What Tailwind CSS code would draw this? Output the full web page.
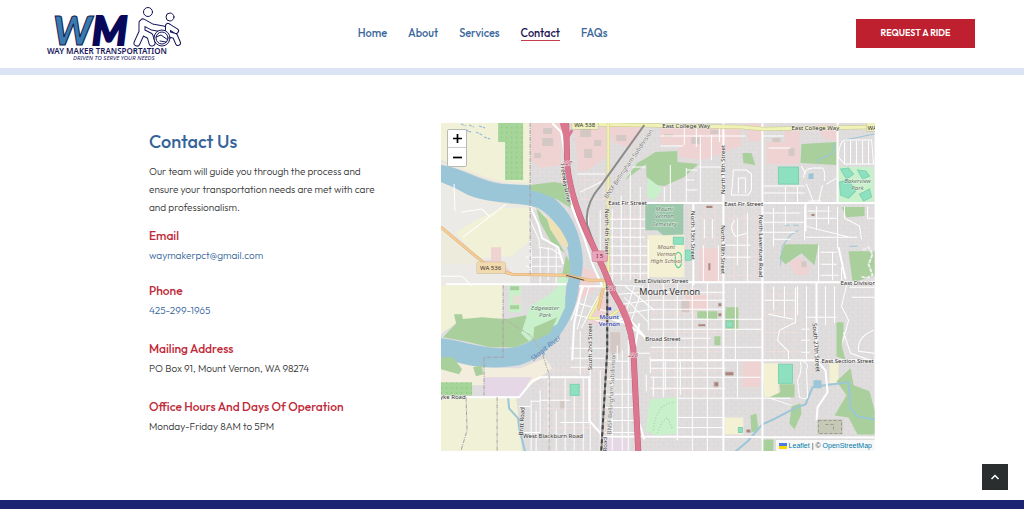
<!DOCTYPE html>
<html lang="en">
<head>
<meta charset="utf-8">
<meta name="viewport" content="width=device-width, initial-scale=1">
<title>Contact | Way Maker Transportation</title>
<script src="https://cdn.jsdelivr.net/npm/@tailwindcss/browser@4"></script>
</head>
<body class="flex min-h-screen flex-col bg-white font-[Outfit,Lato,sans-serif] text-[10px] text-[#333]">
<header class="border-b-[7px] border-[#dbe4f5]">
  <div class="grid h-[68px] grid-cols-[minmax(0,312fr)_auto_minmax(0,368fr)] items-center pr-[49px] pb-[2px] pl-[46px]">
    <a href="#" aria-label="Way Maker Transportation home" class="w-[138px]">
      <svg viewBox="46 3 138 60" class="block h-[60px] w-[138px]">
        <g font-family="Lato, sans-serif" font-size="40" font-weight="900" font-style="italic" stroke="#12184f">
          <text x="53" y="45" fill="#397baf">W</text>
          <text x="92" y="45" fill="#08085b" stroke="#08085b" stroke-width="2">M</text>
        </g>
        <g fill="none" stroke-linejoin="round" stroke-linecap="round">
          <path d="M142 23V32L137 43M142 32L150 36L152 43M143 22L152 27L163 29" stroke="#17165b" stroke-width="7"/>
          <path d="M142 23V32L137 43M142 32L150 36L152 43M143 22L152 27L163 29" stroke="#fff" stroke-width="5"/>
          <path d="M168 26V34L175 36L178 43M168 26L176 31" stroke="#17165b" stroke-width="6"/>
          <path d="M168 26V34L175 36L178 43M168 26L176 31" stroke="#fff" stroke-width="4"/>
          <g stroke="#17165b" stroke-width="1">
            <circle cx="148" cy="12" r="4.500" fill="#fff"/>
            <circle cx="170" cy="17" r="4" fill="#fff"/>
            <circle cx="162" cy="38" r="8" fill="#fff"/><circle cx="162" cy="38" r="6"/>
            <path d="M156 37L161 35L168 40M160 41L166 42"/>
          </g>
        </g>
        <text x="47" y="54" font-family="Noto Sans, sans-serif" font-size="8" font-weight="600" fill="#17165b">WAY MAKER TRANSPORTATION</text>
        <text x="73" y="60" font-family="Noto Sans, sans-serif" font-size="6" font-style="italic" fill="#17165b">DRIVEN TO SERVE YOUR NEEDS</text>
      </svg>
    </a>
    <nav aria-label="Main" class="flex gap-[21px] text-[11px] leading-[14px] font-medium text-[#3a689c]">
      <a href="#">Home</a><a href="#">About</a><a href="#">Services</a>
      <a href="#" aria-current="page" class="border-b border-[#c63c48] text-[#1c1650]">Contact</a><a href="#">FAQs</a>
    </nav>
    <button class="h-[29px] w-[119px] justify-self-end bg-[#bf202f] text-[9px] font-semibold text-white">REQUEST A RIDE</button>
  </div>
</header>

<main class="mx-auto grid w-full max-w-[726px] flex-1 grid-cols-[minmax(0,292fr)_minmax(0,433fr)] items-start pt-12 pb-12">
  <section class="max-w-[236px] pt-[7px] leading-5 font-light">
    <h1 class="text-[18px] leading-6 font-medium text-[#34639a]">Contact Us</h1>
    <p class="mt-[9px] leading-[18px]">Our team will guide you through the process and ensure your transportation needs are met with care and professionalism.</p>
    <h2 class="mt-[9px] text-[12px] font-medium text-[#bf2a38]">Email</h2>
    <p><a href="mailto:waymakerpct@gmail.com" class="text-[#34639a]">waymakerpct@gmail.com</a></p>
    <h2 class="mt-[15px] text-[12px] font-medium text-[#bf2a38]">Phone</h2>
    <p><a href="tel:4252991965" class="text-[#34639a]">425-299-1965</a></p>
    <h2 class="mt-[18px] text-[12px] font-medium text-[#bf2a38]">Mailing Address</h2>
    <p>PO Box 91, Mount Vernon, WA 98274</p>
    <h2 class="mt-[18px] text-[12px] font-medium text-[#bf2a38]">Office Hours And Days Of Operation</h2>
    <p>Monday-Friday 8AM to 5PM</p>
  </section>

  <section aria-label="Map" class="relative overflow-hidden">
    <svg viewBox="441 123 433 328" class="block w-full" role="img" aria-label="Street map of Mount Vernon">
      <defs>
        <pattern id="houses" width="9" height="8" patternUnits="userSpaceOnUse">
          <path d="M1 1h2v1h-2zM5 2h2v1h-2zM2 5h1v2h-1zM6 5h2v1h-2z" fill="#d5c9c5"/>
        </pattern>
        <pattern id="orchard" width="5" height="5" patternUnits="userSpaceOnUse">
          <path d="M1 2h1v1h-1z" fill="#6fb15e"/>
        </pattern>
        <pattern id="alleys" width="10" height="19" patternUnits="userSpaceOnUse">
          <path d="M4 0v19M0 9h10" stroke="#f1dede" stroke-width="1"/>
        </pattern>
      </defs>
      <rect x="441" y="123" width="433" height="328" fill="#dfdddd"/>
      <path d="M610 206H645V280H612ZM650 285H723V398H650ZM540 365H608V436H540ZM693 206H760V280H693ZM580 173H606V200H580ZM764 287H800V357H764Z" fill="url(#alleys)"/>
      <path d="M531 123H874V451H531ZM504 285H531V300H504Z" fill="url(#houses)" opacity=".5"/>
      <!-- farmland and floodplain west of the river -->
      <path d="M441 123H530V188L500 182L475 174L441 160Z" fill="#f0f1d6"/>
      <path d="M441 182L500 203L530 205V285H441Z" fill="#ebeae6"/>
      <path d="M500 208H530V240L512 256L478 258L455 232L478 219Z" fill="#f0f1d6"/>
      <path d="M441 227L462 245L480 264L441 263Z" fill="#ecebdc"/>
      <path d="M441 285H503V318L460 320L441 334Z" fill="#f0f1d6"/>
      <path d="M441 352L482 367L520 368L545 358L552 368L530 385H441Z" fill="#f2eddc"/>
      <path d="M441 396H516L522 451H441Z" fill="#f0f1d6"/>
      <path d="M484 377H532L519 396H484ZM600 438h28v13h-28z" fill="#e5d7e5"/>
      <path d="M498 123H523V180H505V142H498Z" fill="#a6d59a"/><path d="M498 123H523V180H505V142H498Z" fill="url(#orchard)"/>
      <path d="M441 382H472V395H441Z" fill="#a6d59a"/><path d="M441 382H472V395H441Z" fill="url(#orchard)"/>
      <path d="M461 124l5 2m3-1l5 2m-8 3l5 2m5 0l6 3m-3-9l6 2m-1 9l6 2m-25-9l5 2" stroke="#8fb6e2" stroke-dasharray="3 1" fill="none"/>
      <!-- commercial and retail blocks -->
      <g fill="#efd3d3">
        <path d="M531 123H561V165L540 168L531 160ZM573 123H606V157L590 169L578 172Z"/>
        <path d="M608 125H646L630 148L612 142Z"/><path d="M660 128H741V145L720 154L703 160L678 157V145H660ZM745 124H762V141H748ZM784 131H799V164H766V142H784ZM815 125H837V141L824 139Z"/>
        <path d="M491 247H501V260L511 272H485V260H491Z"/><path d="M580 265L597 273L594 290L582 298L573 305ZM599 293L612 306L605 324H588Z"/>
        <path d="M742 361H760V387H742ZM685 295H708V310H685ZM789 262L800 257L810 267L806 275H795ZM699 248H719V281H699Z"/>
      </g>
      <g fill="#d4c8c4">
        <path d="M543 128h9v6h-9zM542 138h11v8h-11zM534 153h7v5h-7zM580 129h11v8h-11zM584 149h8v9h-8zM594 140h7v6h-7zM616 135h10v6h-10zM664 134h9v3h-9zM691 137h10v7h-10zM710 130h8v4h-8zM772 138h8v4h-8zM788 148h6v8h-6z"/>
        <path d="M610 332h10v21h-10zM706 205h6v3h-6zM725 371h8v5h-8zM713 381h5v7h-5zM801 261h5v6h-5zM681 300h8v12h-8zM560 400h5v8h-5z"/>
      </g>
      <path d="M647 235H684V277H647ZM762 363H778V397H764ZM724 417H743V434H724ZM829 363H838V383H829Z" fill="#f3f0d4"/>
      <!-- river -->
      <path d="M441 165C462 168 480 181 502 184L530 185C548 191 564 204 573 222C582 241 586 263 579 285C577 306 569 324 554 342C544 353 533 361 519 365C488 370 466 366 441 357V338C460 340 477 347 500 348C518 349 535 340 546 330C559 317 566 304 566 287C570 276 570 266 568 251C563 232 553 216 538 208C520 201 494 205 468 195Q454 187 441 182Z" fill="#9bc6d8"/>
      <path d="M441 163C465 168 480 178 502 182L532 184M441 184L468 197C490 206 514 204 534 208L550 220" fill="none" stroke="#eeeade" stroke-width="2"/>
      <!-- woods and parks -->
      <g fill="#a9cf9c">
        <path d="M530 185L554 182L566 184L572 209L558 200L541 193L530 190Z"/>
        <path d="M536 208L548 220L552 232L562 248L570 262V276L561 280L566 254L551 242L540 222Z"/>
        <path d="M443 337L460 319L482 317L505 319L526 315L532 340L515 347L490 347L465 341Z"/>
        <path d="M454 314h8l1 6-7 3zM441 357h12l9 12-3 5-18-5zM473 367l9-2 1 9-7 2z"/>
        <path d="M646 158L655 152L677 151V162L698 164L684 177L664 186L651 184L646 176V164L625 180L637 163Z"/>
        <path d="M742 153H751L755 165L743 163ZM801 144L836 142V165L800 163ZM841 207H864V216L846 217ZM784 244H818L814 265L801 253L785 264L779 258ZM848 251H874V276L852 282Z"/>
        <path d="M697 311H717V319L697 318ZM714 336h6v9h-6zM725 307h13v22h-13z"/>
        <path d="M836 322H843V331L841 345L845 360L836 356ZM779 384H794V397L769 397L780 392ZM791 406L800 403L801 413L794 429L789 423ZM836 381L850 368L853 385L869 391L874 410V434H857L848 417L834 415L846 395ZM750 415L756 413L758 430L751 432ZM761 439h12v12h-12z"/>
      </g>
      <path d="M645 203H683V234L663 235L657 230H645Z" fill="#9dc8ac"/>
      <g fill="#c8f0cb">
        <path d="M530 306L547 296L559 285H565V307L557 324L540 333L529 341L521 333Z"/>
        <path d="M838 167H873V203H838ZM648 178L662 189L654 200L646 196Z"/>
        <path d="M650 399L677 397V433L656 435L645 430Z"/><path d="M509 285h12v27h-12zM559 271l9 8-4 10-6-3z"/>
      </g>
      <path d="M513 295h8v9h-8z" fill="#e6ddd3"/>
      <g fill="#a9cf9c"><path d="M534 327l23-10-7 16-17 8z"/><path d="M510 286h9v4h-9zM510 305h9v4h-9z"/></g>
      <path d="M546 216Q559 223 568 244Q568 250 562 245L550 229Z" fill="#eee1b5"/>
      <!-- creeks -->
      <g fill="none" stroke="#9bc6d8" stroke-width="1">
        <path d="M508 397L509 408L518 418L519 428L525 451" stroke-width="2"/>
        <path d="M735 451L747 441L762 424L775 418L796 407L805 404L812 387L824 385L848 382L850 408L857 416L874 419" stroke-width="2"/>
        <path d="M780 265L782 246L790 235L798 230M784 225h5m4 0h5M816 161L832 153L834 144M844 140L874 134M849 246h8"/>
      </g>
      <path d="M813 380h8v8h-8zM808 174l5-1v6h-5z" fill="#9bc6d8"/>
      <!-- residential street grid -->
      <g fill="none" stroke="#fff" stroke-width="1">
        <path d="M612 209V291M621 196V280M630 172V280M640 187V280M648 240V330M588 208V237M600 210V250M664 187V201M670 165V201M686 168V203M700 135V203M711 135V160M606 219H645M606 228H645M606 237H645M606 246H647M606 255H647M606 264H647M606 273H647M577 174H605M580 192L605 180M632 167H645M698 167H725"/>
        <path d="M663 282V397M677 282V440M692 282V451M707 282V451M735 288V360M650 292H725M650 300H725M650 309H725M650 319H762M650 329H762M650 338H710M650 347H762M650 360H760M650 368H725M650 377H760M650 388H725M677 398H790M677 417H725M677 427H723M653 377V396M665 361V390M680 361V395M737 360V397"/>
        <path d="M660 136H745M660 146H683M684 126V145M696 127V147M719 126V142M733 170H746L751 174V190L748 195H731ZM738 193V178H745V193M734 220Q728 228 735 236L747 233M737 218V265M747 213V282M725 245H750M725 257H750M704 219V238M712 219V238M703 245V282M718 245V281M686 170H697M686 180H694M686 190H697"/>
        <path d="M762 136H783M768 148H790M763 186H804M763 193H804M785 187V202M797 187V202M773 208V246M785 206V225M804 206V240M763 213H800M763 222H804M763 232H795M773 239H790M803 178Q803 169 812 168H822Q825 170 824 181M806 184L813 202M822 185L818 202M805 174L801 166M826 184L836 178M808 201H821"/>
        <path d="M838 157Q838 143 844 140L871 140L873 164H844ZM844 142V164M850 141V164M856 141V164M862 141V164M868 141V164M837 207V248M844 207V218L859 226L861 239M807 211H830M806 218H836M805 226L849 237M805 237H857M816 206V230M828 206V224M867 206V218H874M818 245V282M832 252V280M820 252H836M820 264H836M820 275H838M841 267V280"/>
        <path d="M773 286V310M784 286V316M795 287V322L779 330L777 340L788 351V359M797 286V315M806 286V359M764 300H795M768 314L793 319M805 317H836M801 329H809M801 340H809M801 352H809M825 286V325M834 286V323M846 285L841 306L848 320L842 342M849 287H874M851 297H874M873 330Q856 337 858 351L874 353M843 332L850 353L870 360M800 361Q802 371 797 380L799 397Q808 401 807 394L806 370Q809 362 802 361M770 398L791 405"/>
        <path d="M556 410V451M565 378V451M574 396V450M583 378V450M548 379V439M540 390V432M540 400H570M560 422H590M572 358H608M570 367H606M570 348H609M580 331V375M590 328V450M600 370V450M612 367V450M622 350V450M628 340V450M605 361H629M605 379H632M605 394H632M605 407H634M605 420H634M605 432H635M617 345V361M631 353H650M646 374V391M650 357V373M624 297L648 322M625 286L654 310M634 286L625 314M643 285L630 324M615 285L641 286M618 294L645 292M622 304L650 300M628 313L650 309M584 285L571 320M589 286L577 329M598 296L581 328M578 303L606 311M574 314L604 322"/>
        <path d="M531 248V275M540 247V285M548 247V280M556 247V285M526 257H560M526 266H562M523 275H562M529 218L539 240V247L552 249L559 254M454 184L455 211M461 212L482 209L490 217M463 237L506 204M441 276H462L472 286M531 400V451M536 410V451M522 432H540M531 401H540M519 406H530"/>
      </g>
      <g fill="none" stroke="#fff" stroke-width="2">
        <path d="M530 274V240M446 284H566M579 286H601M441 397H519L532 381L540 377H589V420L603 436L874 437M650 203H874M606 203H650M662 282H874M762 123V451M723 123V451M693 203V285M837 123V203M805 203V231M838 247L845 279M650 360H874M816 282V360L825 370L827 392L817 407L816 420M571 205L584 238L593 266L605 292M552 123L561 132L565 156L567 184L577 221"/>
        <path d="M530 206L538 224L542 238L558 247L563 264M582 285L574 323L572 360M612 319L626 323L644 336M639 323L634 352L638 420L644 439"/>
      </g>
      <!-- sports fields -->
      <g fill="#8de0c0" stroke="#7fd2b0" stroke-width="1">
        <rect x="778" y="167" width="20" height="17"/><rect x="778" y="364" width="14" height="19"/><rect x="570" y="384" width="9" height="11"/>
        <path d="M840 169l8-1 5 6-7 5zM839 182l9-2 7 11-7 7-8-3zM857 170l8 1 4 5-7 3zM859 194l10-5 2 8-8 4zM673 237h10v7h-10zM685 250h6v10h-6zM726 321h6v6h-6zM738 427h4v5h-4z"/>
      </g>
      <g fill="none" stroke="#55c98f"><path d="M675 255q3-6 6 0v9q-3 7-6 0z"/><path d="M653 430q3-28 22-28M657 433l5-12 5-4 5 11" stroke="#9ccf9c" stroke-dasharray="1 2"/></g>
      <!-- secondary and primary roads -->
      <g fill="none" stroke-linejoin="round">
        <path d="M577 124L741 127L762 129L874 127" stroke="#c6cb88" stroke-width="4"/><path d="M577 124L741 127L762 129L874 127" stroke="#f1f3b6" stroke-width="3"/>
        <path d="M608 123V270L603 291L589 318H607L618 310" stroke="#d4d29a" stroke-width="3"/><path d="M608 123V270L603 291L589 318H607L618 310" stroke="#f3f2a8" stroke-width="2"/>
        <path d="M441 227L478 258L491 268L512 274L566 275L589 280L604 280M603 288L598 310" stroke="#d6ae80" stroke-width="3"/><path d="M441 227L478 258L491 268L512 274L566 275L589 280L604 280M603 288L598 310" stroke="#f8cb91" stroke-width="2"/>
        <path d="M566 275L584 280" stroke="#56544d" stroke-width="1"/>
        <path d="M617 318L630 320Q637 327 645 338" stroke="#fff" stroke-width="2"/>
        <!-- railway -->
        <path d="M644 125L601 185Q584 204 587 225L602 267L607 285V350L601 451" stroke="#8b8b8b" stroke-width="2"/>
        <path d="M607 285V350L601 451" stroke="#454545" stroke-width="2" stroke-dasharray="4 3"/>
        <path d="M566 123L567 165C570 194 580 220 593 246L603 268L613 292C626 313 631 330 633 348L638 451" stroke="#c0607b" stroke-width="6"/>
        <path d="M566 123L567 165C570 194 580 220 593 246L603 268L613 292C626 313 631 330 633 348L638 451" stroke="#dd7790" stroke-width="5"/>
        <path d="M561 123L566 140L572 130M609 285L624 314L632 345M623 305L631 325L629 337" stroke="#dd7790" stroke-width="3"/>
      </g>
      <g fill="none" stroke="#a89da8" stroke-width="1" stroke-dasharray="4 1 1 1">
        <path d="M530 123V275M503 285V357H484V395M466 397L467 430L461 450M497 397V451"/>
        <path d="M503 318L530 335L541 350L549 374V451" stroke="#b4b4aa"/>
      </g>
      <path d="M817 419H842V434H817Z" fill="#c5c9b5"/><path d="M818 420H841V433H818ZM825 424h8v5" fill="none" stroke="#999" stroke-dasharray="3 2"/>
      <path d="M862 250l6-3 4 7-4 10 4 11-6 3-6-2" fill="none" stroke="#eee" stroke-width="2" stroke-dasharray="4 1"/>
      <g fill="#a98680"><path d="M725 372h8v3h-8zM714 382h4v4h-4zM698 324h7v2h-7zM718 303h3v3h-3zM718 313h3v3h-3zM706 206h6v2h-6zM708 263h2v7h-2zM746 429h4v3h-4zM811 214h3v2h-3z"/></g>
      <path d="M608 307h3v3h-3z" fill="#3b4db5"/>
      <!-- labels -->
      <g font-family="Noto Sans, sans-serif" font-size="6" fill="#333" stroke="#f4f3f1" stroke-width="1" stroke-opacity=".8" paint-order="stroke">
        <g stroke="#b8b28c" stroke-width="1"><rect x="572" y="121" width="26" height="8" rx="1" fill="#eef0bd"/><rect x="866" y="123" width="12" height="8" fill="#eef0bd"/><rect x="477" y="262" width="28" height="11" rx="1" fill="#f3d9ae"/></g>
        <rect x="592" y="251" width="15" height="10" rx="1" fill="#e8a7bb" stroke="#c0607b"/>
        <text x="574" y="127" stroke="none">WA 538</text><text x="867" y="130" stroke="none">WA</text><text x="480" y="270" stroke="none">WA 536</text>
        <text x="596" y="258" fill="#7b183b" stroke="none">I 5</text>
        <text x="662" y="128">East College Way</text><text x="791" y="130">East College Way</text>
        <text x="608" y="205">East Fir Street</text><text x="724" y="206">East Fir Street</text>
        <text x="634" y="283">East Division Street</text><text x="840" y="285">East Division Street</text>
        <text x="645" y="341">Broad Street</text><text x="821" y="363">East Section Street</text><text x="440" y="399">yke Road</text><text x="523" y="438">West Blackburn Road</text>
        <text transform="translate(605 209) rotate(90)">North 4th Street</text>
        <text transform="translate(725 194) rotate(-90)">North 18th Street</text><text transform="translate(721 225) rotate(90)">North 18th Street</text>
        <text transform="translate(691 211) rotate(90)">North 15th Street</text><text transform="translate(759 215) rotate(90)">North Laventure Road</text>
        <text transform="translate(592 370) rotate(-90)">South 2nd Street</text><text transform="translate(812 323) rotate(86)">South 27th Street</text>
        <text transform="translate(560 164) rotate(80)">Freeway Drive</text><text transform="translate(523 435) rotate(-87)">Britt Road</text><text transform="translate(607 451) rotate(-90)">Road</text>
        <g fill="#777"><text transform="translate(611 434) rotate(-87)">BNSF Bellingham Subdivision</text><text transform="translate(607 199) rotate(-56)">BNSF Bellingham Subdivision</text></g>
        <g fill="#4e805e" font-style="italic" text-anchor="middle">
          <text x="664" y="211">Mount</text><text x="664" y="218">Vernon</text><text x="664" y="226">Cemetery</text>
          <text x="545" y="310">Edgewater</text><text x="545" y="317">Park</text><text x="857" y="183">Bakerview</text><text x="857" y="190">Park</text>
        </g>
        <g fill="#867348" font-style="italic" text-anchor="middle"><text x="666" y="249">Mount</text><text x="666" y="256">Vernon</text><text x="666" y="263">High School</text></g>
        <text transform="translate(533 361) rotate(-39)" fill="#5e81b5" stroke="none" font-size="7" font-style="italic">Skagit River</text>
        <g fill="#3b4db5" font-weight="600" text-anchor="middle"><text x="609" y="319">Mount</text><text x="609" y="326">Vernon</text></g>
        <g fill="#b23d5e" font-style="italic"><text x="562" y="165">227</text><text x="606" y="290">226</text><text x="628" y="357">226</text></g>
        <text x="639" y="295" font-size="9">Mount Vernon</text>
      </g>
    </svg>
    <div class="absolute top-[6px] left-[6px] flex flex-col divide-y divide-[#ccc] rounded-[2px] border border-[#b9b9b5] bg-white text-black">
      <button aria-label="Zoom in" class="grid h-[18px] w-[18px] place-items-center"><svg viewBox="0 0 9 9" class="size-[9px]"><path d="M4.500 0v9M0 4.500h9" stroke="currentColor" stroke-width="1.700"/></svg></button>
      <button aria-label="Zoom out" class="grid h-[18px] w-[18px] place-items-center"><svg viewBox="0 0 9 9" class="size-[9px]"><path d="M0 4.500h9" stroke="currentColor" stroke-width="1.700"/></svg></button>
    </div>
    <div class="absolute right-0 bottom-0 flex h-[11px] items-center gap-[2px] bg-white/80 px-[3px] font-[Liberation_Sans,sans-serif] text-[7px] leading-[11px] font-normal text-[#333]">
      <a href="#" class="flex items-center gap-[2px] text-[#0078a8]"><svg viewBox="0 0 8 6" class="h-[6px] w-2"><path fill="#4c7be1" d="M0 0h8v3H0z"/><path fill="#ffd500" d="M0 3h8v3H0z"/></svg>Leaflet</a>
      <span>| ©</span><a href="#" class="text-[#0078a8]">OpenStreetMap</a>
    </div>
  </section>
</main>
<footer class="h-[9px] bg-[#1b2372]"></footer>
<button aria-label="Back to top" class="fixed right-4 bottom-[19px] grid size-[26px] place-items-center bg-[#2b2e2f] text-white">
  <svg viewBox="0 0 10 8" class="h-2 w-[10px]" fill="none" stroke="currentColor" stroke-width="1.500"><path d="M1.500 6L5 2.500L8.500 6"/></svg>
</button>
</body>
</html>
